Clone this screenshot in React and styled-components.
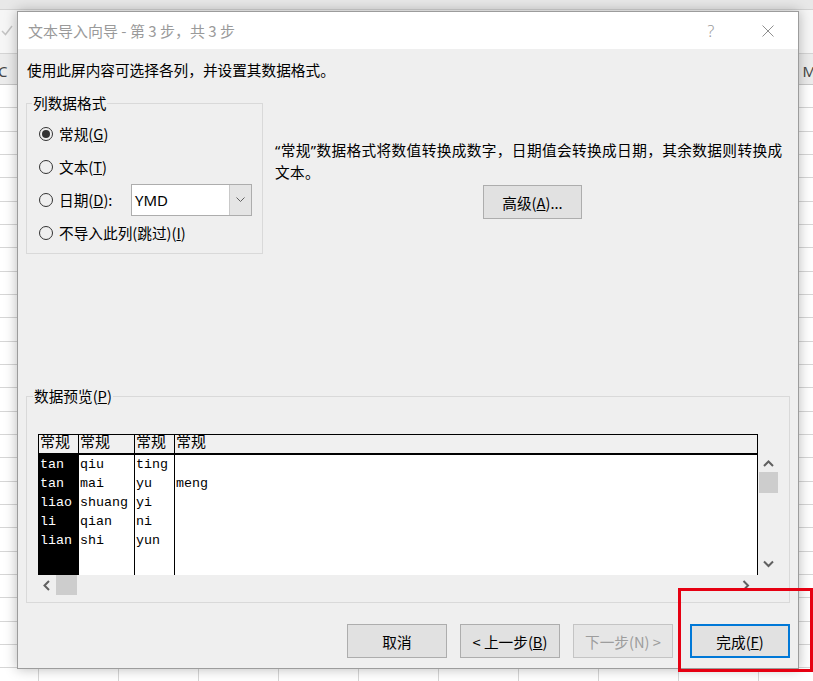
import React from 'react';
import styled, { createGlobalStyle, css } from 'styled-components';

const GlobalStyle = createGlobalStyle`
  html, body {
    margin: 0;
    padding: 0;
  }
  body {
    width: 813px;
    height: 681px;
    overflow: hidden;
    font-family: "Noto Sans CJK SC", "Noto Sans", sans-serif;
  }
`;

const UI_FONT = `"Noto Sans CJK SC", "Noto Sans", sans-serif`;
const MONO_FONT = `"Liberation Mono", "Noto Sans CJK SC", monospace`;

/* ---------- spreadsheet behind the dialog ---------- */

const Sheet = styled.div`
  position: relative;
  width: 813px;
  height: 681px;
  overflow: hidden;
  background: #fff;
  display: flex;
  flex-direction: column;
`;

const TopStrip = styled.div`
  height: 9px;
  background: #e8e8e8;
  border-bottom: 1px solid #d2d2d2;
`;

const FormulaBar = styled.div`
  height: 44px;
  background: #f6f6f6;
  border-bottom: 1px solid #d4d4d4;
  display: flex;
  align-items: center;
  padding: 0 0 4px 1px;
  box-sizing: border-box;
`;

const ColumnHeaders = styled.div`
  height: 26px;
  background: #ececec;
  border-bottom: 1px solid #c8c8c8;
  display: flex;
  align-items: center;
  justify-content: space-between;
  padding-top: 4px;
  box-sizing: content-box;
  font-family: "Noto Sans", sans-serif;
  font-size: 15px;
  color: #444;
`;

const ColLetter = styled.span`
  margin: ${p => (p.$side === 'left' ? '0 0 0 -2px' : '0 -3px 0 0')};
`;

const Grid = styled.div`
  flex: 1;
  background-image:
    repeating-linear-gradient(to right, transparent 0 38px, #d6d6d6 38px 39px, transparent 39px 80px),
    repeating-linear-gradient(to bottom, transparent 0 22.33px, #d6d6d6 22.33px 23.33px);
`;

/* ---------- dialog ---------- */

const Dialog = styled.div`
  position: absolute;
  left: 17px;
  top: 11px;
  width: 782px;
  height: 658px;
  box-sizing: border-box;
  border: 1px solid #9c9c9c;
  background: #efefef;
  box-shadow: 0 0 12px rgba(0, 0, 0, 0.28);
  display: flex;
  flex-direction: column;
  font-family: ${UI_FONT};
  color: #000;
`;

const TitleBar = styled.div`
  height: 37px;
  flex-shrink: 0;
  background: #fff;
  display: flex;
  align-items: center;
  padding: 0 7px 0 10px;
`;

const Title = styled.div`
  flex: 1;
  font-size: 15px;
  line-height: 20px;
  color: #9a9a9a;
`;

const TitleButton = styled.div`
  width: 46px;
  height: 30px;
  display: flex;
  align-items: center;
  justify-content: center;
  color: #9a9a9a;
  font-family: "Noto Sans", sans-serif;
  font-size: 16px;
  font-weight: 300;
  & + & {
    margin-left: 11px;
  }
`;

const Body = styled.div`
  flex: 1;
  display: flex;
  flex-direction: column;
  padding: 0 8px 10px 8px;
  font-size: 14.67px;
`;

const Intro = styled.div`
  margin-top: 11px;
  line-height: 20px;
  padding-left: 1px;
`;

const TopRow = styled.div`
  display: flex;
  align-items: flex-start;
  margin-top: 13px;
`;

const GroupBox = styled.fieldset`
  margin: ${p => p.$top || 0}px 0 0 0;
  padding: ${p => p.$pad};
  border: 1px solid #d9d9d9;
  min-width: 0;
  box-sizing: border-box;
  ${p => p.$width && css`width: ${p.$width}px;`}
`;

const Legend = styled.legend`
  margin-left: ${p => p.$indent}px;
  padding: 0 1px;
  font-size: 14.67px;
  line-height: 20px;
`;

const RadioRow = styled.div`
  height: 33px;
  display: flex;
  align-items: center;
  padding: 0 10px 0 12px;
  line-height: 20px;
`;

const RadioCircle = styled.span`
  width: 14px;
  height: 14px;
  box-sizing: border-box;
  border: 1px solid #333;
  border-radius: 50%;
  display: flex;
  align-items: center;
  justify-content: center;
  flex-shrink: 0;
  &::after {
    content: '';
    width: 8px;
    height: 8px;
    border-radius: 50%;
    background: ${p => (p.$checked ? '#333' : 'transparent')};
  }
`;

const RadioLabel = styled.span`
  margin-left: 6px;
  white-space: nowrap;
`;

const Select = styled.div`
  margin-left: auto;
  width: 121px;
  height: 32px;
  box-sizing: border-box;
  border: 1px solid #adadad;
  background: #fff;
  display: flex;
  align-items: stretch;
`;

const SelectValue = styled.div`
  flex: 1;
  display: flex;
  align-items: center;
  padding-left: 3px;
  font-family: "Noto Sans", sans-serif;
  font-size: 15px;
`;

const SelectArrow = styled.div`
  width: 21px;
  background: #e5e5e5;
  border-left: 1px solid #c9c9c9;
  display: flex;
  align-items: center;
  justify-content: center;
`;

const DescCol = styled.div`
  flex: 1;
  margin-left: 12px;
  padding-top: 46px;
  display: flex;
  flex-direction: column;
  align-items: center;
`;

const DescText = styled.div`
  align-self: stretch;
  line-height: 22px;
  letter-spacing: 0.38px;
  white-space: nowrap;
`;

const Quote = styled.span`
  font-family: "Noto Sans", sans-serif;
`;

const Button = styled.div`
  width: ${p => p.$w || 100}px;
  height: 34px;
  box-sizing: border-box;
  display: flex;
  align-items: center;
  justify-content: center;
  background: ${p => (p.$disabled ? '#e6e6e6' : '#e1e1e1')};
  border: 1px solid ${p => (p.$disabled ? '#c4c4c4' : '#adadad')};
  color: ${p => (p.$disabled ? '#9d9d9d' : '#000')};
  font-size: 14.67px;
  white-space: nowrap;
  ${p => p.$default && css`border: 2px solid #0078d7;`}
`;

const AdvancedButton = styled(Button)`
  margin-top: 2px;
`;

const PreviewGrid = styled.div`
  margin-left: 11px;
  display: grid;
  grid-template-columns: 720px 20px;
  grid-template-rows: 21px 120px 20px;
`;

const Table = styled.div`
  grid-column: 1;
  grid-row: 1 / span 2;
  display: flex;
  box-sizing: border-box;
  border: 1px solid #000;
  border-bottom: none;
  background: #fff;
`;

const Column = styled.div`
  display: flex;
  flex-direction: column;
  box-sizing: border-box;
  ${p => (p.$width ? css`width: ${p.$width}px; flex-shrink: 0;` : css`flex: 1;`)}
  ${p => !p.$last && css`border-right: 1px solid #000;`}
`;

const HeaderCell = styled.div`
  height: 18px;
  border-bottom: 2px solid #000;
  background: #f0f0f0;
  font-family: ${MONO_FONT};
  font-size: 15px;
  line-height: 18px;
  padding-left: 1px;
  white-space: nowrap;
  overflow: hidden;
`;

const DataArea = styled.div`
  flex: 1;
  background: ${p => (p.$selected ? '#000' : '#fff')};
  color: ${p => (p.$selected ? '#fff' : '#000')};
  font-family: ${MONO_FONT};
  font-size: 13.33px;
  line-height: 19px;
  padding-left: 1px;
  white-space: pre;
`;

const VScroll = styled.div`
  grid-column: 2;
  grid-row: 2;
  display: flex;
  flex-direction: column;
  align-items: center;
  padding: 5px 0 7px 1px;
`;

const HScroll = styled.div`
  grid-column: 1;
  grid-row: 3;
  display: flex;
  align-items: center;
  padding-left: 5px;
  padding-right: 8px;
`;

const Thumb = styled.div`
  background: #cdcdcd;
  ${p =>
    p.$vertical
      ? css`
          width: 19px;
          height: 21px;
          margin: 4px 0 auto 0;
        `
      : css`
          width: 21px;
          height: 20px;
          margin: 0 auto 0 5px;
        `}
`;

const ButtonRow = styled.div`
  display: flex;
  justify-content: flex-end;
  margin-top: 21px;
  gap: 13px;
`;

const FinishButton = styled(Button)`
  margin-left: 4px;
`;

const Annotation = styled.div`
  position: absolute;
  left: 678px;
  top: 588px;
  width: 135px;
  height: 84px;
  box-sizing: border-box;
  border: 3px solid #e60012;
`;

/* ---------- small drawings ---------- */

const Chevron = ({ dir }) => {
  const paths = {
    up: 'M1 6 L5.5 1.5 L10 6',
    down: 'M1 1.5 L5.5 6 L10 1.5',
    left: 'M6 1 L1.5 5.5 L6 10',
    right: 'M1.5 1 L6 5.5 L1.5 10',
  };
  const vertical = dir === 'up' || dir === 'down';
  return (
    <svg
      width={vertical ? 11 : 8}
      height={vertical ? 8 : 11}
      viewBox={vertical ? '0 0 11 8' : '0 0 8 11'}
    >
      <path d={paths[dir]} fill="none" stroke="#606060" strokeWidth="2" />
    </svg>
  );
};

const CheckMark = () => (
  <svg width="12" height="12" viewBox="0 0 12 12">
    <path d="M1 7 L4.5 10.5 L11 2" fill="none" stroke="#c4c4c4" strokeWidth="1.5" />
  </svg>
);

const CloseIcon = () => (
  <svg width="12" height="12" viewBox="0 0 12 12">
    <path d="M0.5 0.5 L11.5 11.5 M11.5 0.5 L0.5 11.5" stroke="#8f8f8f" strokeWidth="1" />
  </svg>
);

const SmallDown = () => (
  <svg width="9" height="5" viewBox="0 0 9 5">
    <path d="M0.5 0.5 L4.5 4.5 L8.5 0.5" fill="none" stroke="#606060" strokeWidth="1" />
  </svg>
);

const columns = [
  { width: 40, rows: ['tan', 'tan', 'liao', 'li', 'lian'], selected: true },
  { width: 56, rows: ['qiu', 'mai', 'shuang', 'qian', 'shi'] },
  { width: 40, rows: ['ting', 'yu', 'yi', 'ni', 'yun'] },
  { rows: ['', 'meng'], last: true },
];

const App = () => (
  <>
    <GlobalStyle />
    <Sheet>
      <TopStrip />
      <FormulaBar>
        <CheckMark />
      </FormulaBar>
      <ColumnHeaders>
        <ColLetter $side="left">C</ColLetter>
        <ColLetter $side="right">M</ColLetter>
      </ColumnHeaders>
      <Grid />

      <Dialog>
        <TitleBar>
          <Title>文本导入向导 - 第 3 步，共 3 步</Title>
          <TitleButton>?</TitleButton>
          <TitleButton>
            <CloseIcon />
          </TitleButton>
        </TitleBar>

        <Body>
          <Intro>使用此屏内容可选择各列，并设置其数据格式。</Intro>

          <TopRow>
            <GroupBox $width={237} $pad="4px 0 4px 0">
              <Legend $indent={5}>列数据格式</Legend>
              <RadioRow>
                <RadioCircle $checked />
                <RadioLabel>常规(<u>G</u>)</RadioLabel>
              </RadioRow>
              <RadioRow>
                <RadioCircle />
                <RadioLabel>文本(<u>T</u>)</RadioLabel>
              </RadioRow>
              <RadioRow>
                <RadioCircle />
                <RadioLabel>日期(<u>D</u>):</RadioLabel>
                <Select>
                  <SelectValue>YMD</SelectValue>
                  <SelectArrow>
                    <SmallDown />
                  </SelectArrow>
                </Select>
              </RadioRow>
              <RadioRow>
                <RadioCircle />
                <RadioLabel>不导入此列(跳过)(<u>I</u>)</RadioLabel>
              </RadioRow>
            </GroupBox>

            <DescCol>
              <DescText>
                <Quote>“</Quote>常规<Quote>”</Quote>数据格式将数值转换成数字，日期值会转换成日期，其余数据则转换成
                <br />
                文本。
              </DescText>
              <AdvancedButton $w={99}>高级(<u>A</u>)...</AdvancedButton>
            </DescCol>
          </TopRow>

          <GroupBox $top={132} $pad="28px 0 7px 0">
            <Legend $indent={6}>数据预览(<u>P</u>)</Legend>
            <PreviewGrid>
              <Table>
                {columns.map((col, i) => (
                  <Column key={i} $width={col.width} $last={col.last}>
                    <HeaderCell>常规</HeaderCell>
                    <DataArea $selected={col.selected}>{col.rows.join('\n')}</DataArea>
                  </Column>
                ))}
              </Table>
              <VScroll>
                <Chevron dir="up" />
                <Thumb $vertical />
                <Chevron dir="down" />
              </VScroll>
              <HScroll>
                <Chevron dir="left" />
                <Thumb />
                <Chevron dir="right" />
              </HScroll>
            </PreviewGrid>
          </GroupBox>

          <ButtonRow>
            <Button>取消</Button>
            <Button>&lt; 上一步(<u>B</u>)</Button>
            <Button $disabled>下一步(N) &gt;</Button>
            <FinishButton $default>完成(<u>F</u>)</FinishButton>
          </ButtonRow>
        </Body>
      </Dialog>

      <Annotation />
    </Sheet>
  </>
);

export default App;
